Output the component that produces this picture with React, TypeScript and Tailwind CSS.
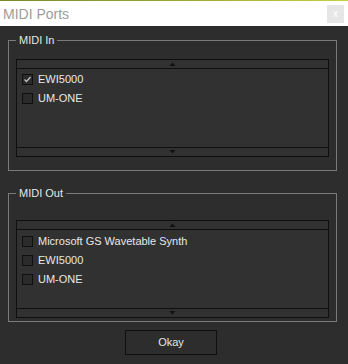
import React from "react";

const font = { fontFamily: '"Liberation Sans", Arial, sans-serif' };

function Check({ checked }: { checked?: boolean }) {
  return (
    <div className="w-[11px] h-[11px] border border-[#0f0f0f] bg-[#2b2b2b] flex items-center justify-center shrink-0">
      {checked && (
        <svg width="9" height="9" viewBox="0 0 9 9">
          <path d="M1.5 4.5 L3.5 6.5 L7.5 2" fill="none" stroke="#bdbdbd" strokeWidth="1.3" />
        </svg>
      )}
    </div>
  );
}

function Arrow({ up }: { up?: boolean }) {
  return (
    <svg width="7" height="4" viewBox="0 0 7 4">
      {up ? <path d="M0.5 4 L3.5 0.5 L6.5 4 Z" fill="#111" /> : <path d="M0.5 0 L3.5 3.5 L6.5 0 Z" fill="#111" />}
    </svg>
  );
}

function PortList({ items, rowsH, ptop }: { items: { name: string; checked?: boolean }[]; rowsH: string; ptop: string }) {
  return (
    <div className="border border-[#0f0f0f] bg-[#313131] flex flex-col">
      <div className="h-[9px] border-b border-[#0f0f0f] flex items-center justify-center">
        <Arrow up />
      </div>
      <div className={`${rowsH} ${ptop} pl-[5px] flex flex-col`}>
        {items.map((it) => (
          <div key={it.name} className="h-[19px] flex items-center gap-[5px]">
            <Check checked={it.checked} />
            <span className="text-[11px] leading-none text-[#e8e8e8]">{it.name}</span>
          </div>
        ))}
      </div>
      <div className="h-[9px] border-t border-[#0f0f0f] flex items-center justify-center">
        <Arrow />
      </div>
    </div>
  );
}

export default function App() {
  return (
    <div className="w-[348px] h-[364px] flex flex-col bg-[#2d2d2d] overflow-hidden" style={font}>
      <div className="h-[1px] bg-gradient-to-r from-[#7a8a2a] via-[#9aa830] to-[#c8d040]" />
      <div className="h-[25px] bg-white flex items-center justify-between pl-[3px] pr-[4px]">
        <span className="text-[14px] text-[#9c9c9c] leading-none">MIDI Ports</span>
        <div className="w-[17px] h-[18px] bg-[#e6e6e6] flex items-center justify-center text-[10px] text-white leading-none">x</div>
      </div>
      <div className="flex flex-col px-[8px] pr-[11px]">
        <fieldset className="mt-[7px] border border-[#7a7a7a] px-[7px] pt-[12px] pb-[13px]">
          <legend className="ml-[0px] px-[3px] text-[11px] leading-[14px] text-[#e6e6e6]">MIDI In</legend>
          <PortList
            items={[{ name: "EWI5000", checked: true }, { name: "UM-ONE" }]}
            rowsH="h-[78px]"
            ptop="pt-[1px]"
          />
        </fieldset>
        <fieldset className="mt-[15px] border border-[#7a7a7a] px-[7px] pt-[20px] pb-[3px]">
          <legend className="px-[3px] text-[11px] leading-[14px] text-[#e6e6e6]">MIDI Out</legend>
          <PortList
            items={[{ name: "Microsoft GS Wavetable Synth" }, { name: "EWI5000" }, { name: "UM-ONE" }]}
            rowsH="h-[78px]"
            ptop="pt-[2px]"
          />
        </fieldset>
        <div className="flex justify-center mt-[8px]">
          <button className="w-[92px] h-[25px] border border-[#0f0f0f] bg-[#2d2d2d] text-[11px] text-[#e6e6e6] mr-[3px]">
            Okay
          </button>
        </div>
      </div>
    </div>
  );
}
